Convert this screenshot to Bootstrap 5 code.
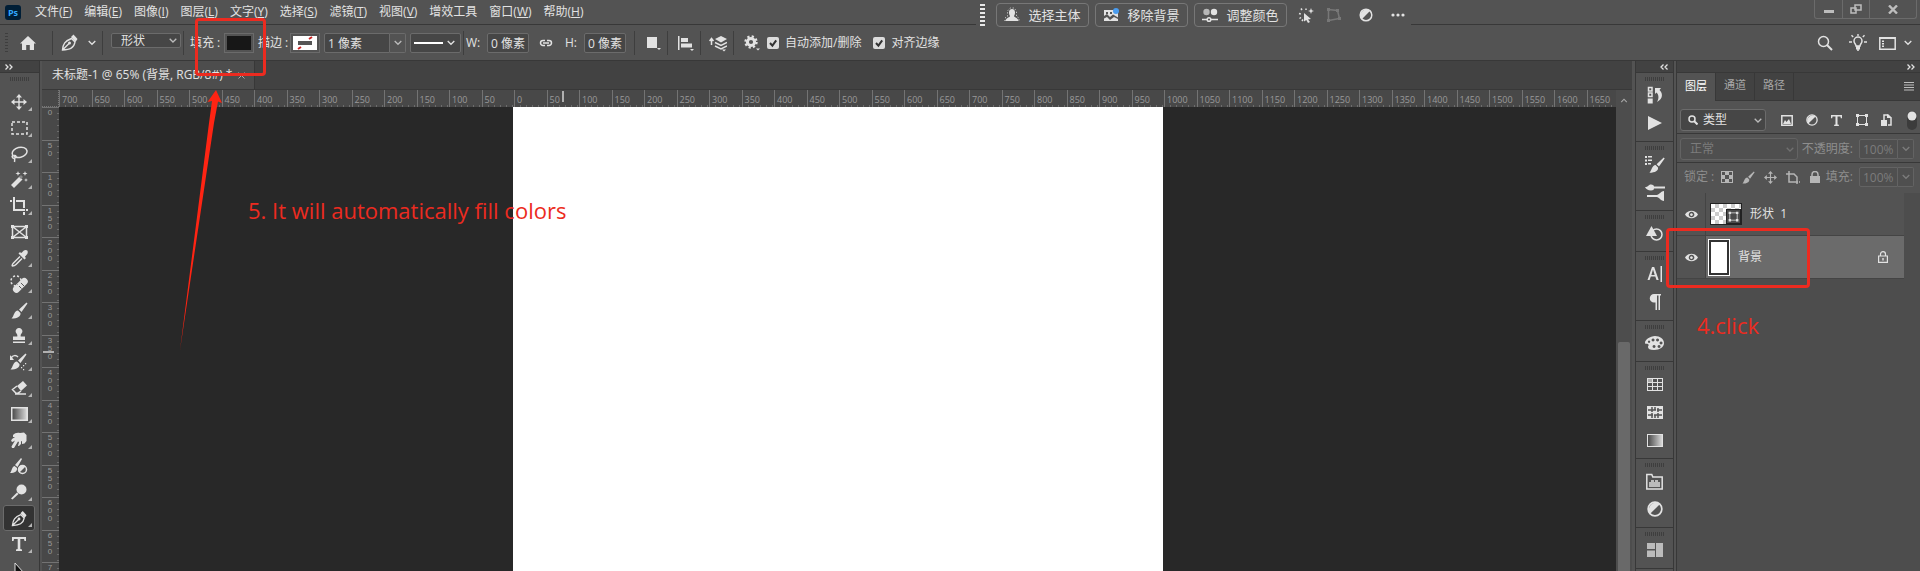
<!DOCTYPE html>
<html lang="zh-CN">
<head>
<meta charset="utf-8">
<meta name="viewport" content="width=device-width, initial-scale=1">
<title>未标题-1</title>
<link href="https://cdn.jsdelivr.net/npm/bootstrap@5.3.0/dist/css/bootstrap.min.css" rel="stylesheet">
<style>
:root{--bar:#535353;--well:#424242;--line:#383838;--pane:#4d4d4d;--ink:#e2e2e2;--dim:#8e8e8e;--edge:#6b6b6b;--red:#ec2b20}
body{font-family:"Open Sans","Noto Sans CJK SC",sans-serif;font-size:12px;line-height:16px;color:var(--ink);background:var(--bar);height:100vh;overflow:hidden}
button{border:0;background:none;color:inherit;padding:0;line-height:1}
svg{display:block;flex:none;fill:currentColor}
.ln{fill:none;stroke:currentColor;stroke-width:1.5}
a{color:inherit;text-decoration:none}
.s2{margin-left:2px}.s4{margin-left:4px}.s6{margin-left:6px}.s8{margin-left:8px}.s10{margin-left:10px}.s12{margin-left:12px}
/* menu bar */
.menubar{height:25px;border-bottom:1px solid var(--line);background:var(--bar)}
.menus{gap:12px;margin-left:14px}
.logo{width:16px;height:15px;margin-left:5px;border-radius:3px;background:#001e36;color:#31a8ff;font-size:9px;font-weight:700;line-height:15px;text-align:center}
.winctl{border:1px solid var(--edge);border-top:0;border-radius:0 0 3px 3px;height:19px;margin-right:3px;color:#bdbdbd}
.winctl button{width:27px;display:flex;justify-content:center;align-items:center}
.winctl button+button{border-left:1px solid var(--edge)}
.winctl .wide{width:47px}
/* floating task bar */
.taskbar{left:976px;top:0;width:435px;height:33px;background:var(--bar);gap:6px;padding:1px 4px 0;z-index:3}
.dots{width:5px;height:23px;margin-right:5px;background:repeating-linear-gradient(#e8e8e8 0 2px,transparent 2px 4px)}
.task{height:24px;width:93px;border:1px solid #777;border-radius:4px;font-size:13px;gap:8px}
.tico{width:18px;display:flex;justify-content:center}
/* options bar */
.optbar{height:36px;border-bottom:1px solid var(--line)}
.grip{width:3px;height:20px;margin-left:5px;background:repeating-linear-gradient(#3e3e3e 0 1px,transparent 1px 3px)}
.home{width:40px}
.rule{width:1px;height:24px;background:#3e3e3e}
.fld,.fld:disabled{appearance:none;border:1px solid var(--edge);border-radius:2px;background-color:#464646;color:var(--ink);font-size:12px;line-height:16px;height:20px;padding:0 0 0 3px;min-width:0}
.drop,.drop:disabled{padding-left:9px;background-image:url("data:image/svg+xml,%3Csvg xmlns='http://www.w3.org/2000/svg' viewBox='0 0 8 5'%3E%3Cpath d='M.7.7 4 4 7.3.7' fill='none' stroke='%23bbb' stroke-width='1.3'/%3E%3C/svg%3E");background-repeat:no-repeat;background-position:right 3px center;background-size:8px 5px}
.w42{width:42px}.w66{width:66px}.w70{width:70px}
.low{height:15px;line-height:13px;margin-bottom:4px}
.step{border:1px solid var(--edge);border-left:0;border-radius:0 2px 2px 0;width:16px;height:20px;display:flex;align-items:center;justify-content:center;color:#bbb}
.lbl{width:30px;white-space:nowrap}
.lblx{width:15px}
.swatch{width:30px;height:20px;border:1px solid var(--edge);padding:2px}
.swatch span{display:block;height:100%;background:#171717}
.tick.form-check-input{width:12px;height:12px;margin-top:0;border:0;border-radius:2px;background:#dcdcdc url("data:image/svg+xml,%3Csvg xmlns='http://www.w3.org/2000/svg' viewBox='0 0 12 12'%3E%3Cpath d='M3 6l2.4 2.6L9.2 3.4' fill='none' stroke='%23333' stroke-width='2'/%3E%3C/svg%3E") center/12px no-repeat}
/* columns */
.strip{height:12px;background:var(--well);border-bottom:1px solid var(--line);color:var(--ink)}
.tools{width:40px;border-right:1px solid var(--line);background:var(--bar)}
.hgrip{width:20px;height:4px;margin:4px auto 0;background:repeating-linear-gradient(90deg,#3e3e3e 0 1px,transparent 1px 2px)}
.toolset{padding-top:8px}
.tool{width:32px;height:26px;margin-left:3px;display:flex;align-items:center;justify-content:center;position:relative}
.tool.fly::after{content:"";position:absolute;right:3px;bottom:4px;border:2px solid;border-color:transparent #b5b5b5 #b5b5b5 transparent}
.tool.on{background:#333;box-shadow:inset 0 0 0 1px var(--edge);border-radius:3px}
.doc{margin:0 3px 0 2px;background:var(--well)}
.tabs{height:29px;border-bottom:1px solid var(--line)}
.doctab{height:28px;width:213px;background:var(--pane);border-right:1px solid var(--line);padding-left:10px}
.hr-row{height:17px}
.corner{width:17px;background:#484848;border-right:1px dotted #777;border-bottom:1px dotted #777}
.hruler,.vruler{background:#484848;color:#9a9a9a;font-size:9px;line-height:8px;overflow:hidden;position:relative}
.pair{flex:none;display:flex}
.hruler .pair{width:65px}
.hruler .mark{flex:1 1 0;width:0;border-left:1px solid #737373;padding:6px 0 0 2px;background:repeating-linear-gradient(90deg,transparent 0 5px,#6c6c6c 5px 6px) left bottom/100% 2px no-repeat}
.vruler{width:17px;font-family:"Liberation Sans",sans-serif;font-size:8px}
.vruler .pair{height:65px;flex-direction:column}
.vruler .mark{flex:1 1 0;height:0;border-top:1px solid #737373;padding:1px 6px 0 5px;text-align:center;background:repeating-linear-gradient(transparent 0 5px,#6c6c6c 5px 6px) right top/2px 100% no-repeat}
/* pointer position shown on the rulers */
.at{position:absolute;background:#b0b0b0}
.hruler .at{left:503px;top:1px;width:2px;height:11px}
.vruler .at{top:244px;left:1px;width:11px;height:2px}
.stage{background:#282828;overflow:hidden}
.sheet{width:650px;margin-left:454px;background:#fff}
.vbar{width:16px;background:var(--pane)}
.thumb{width:12px;margin-left:2px;margin-top:239px;background:#696969;border-radius:2px 2px 0 0}
.dock{width:39px;border:solid var(--line);border-width:0 1px;background:var(--bar)}
.dock .bay{border-bottom:1px solid var(--line);padding-bottom:4px}
.dock .bay .hgrip{margin-bottom:0}
.dock .bay button{width:100%;height:28px;display:flex;align-items:center;justify-content:center}
.layers{width:244px;background:var(--pane);border-left:1px solid var(--line);margin-left:2px}
.ptabs{height:28px;background:var(--well)}
.ptabs button{width:39px;border:solid var(--line);border-width:0 1px 1px 0;color:#a8a8a8;font-size:11px;padding-bottom:4px}
.ptabs button.on{background:var(--bar);border-bottom:0;color:#fff}
.ptabs .rest{border-bottom:1px solid var(--line);padding-right:6px;color:#bdbdbd}
.prow{background:var(--bar);border-bottom:1px solid var(--line);padding-left:3px;padding-right:6px}
.r1{height:33px;padding-top:6px}.r2{height:29px;padding-top:2px}.r3{height:30px;padding-bottom:2px;border-bottom:0;color:var(--dim)}
.prow .pick{height:22px;border-radius:3px}
.faint .fld,.faint .step{border-color:#636363;color:#7c7c7c;background-color:#4f4f4f}
.faint{color:var(--dim)}
.faint .drop{background-image:url("data:image/svg+xml,%3Csvg xmlns='http://www.w3.org/2000/svg' viewBox='0 0 8 5'%3E%3Cpath d='M.7.7 4 4 7.3.7' fill='none' stroke='%23707070' stroke-width='1.3'/%3E%3C/svg%3E")}
.filt{gap:8px}.locks{gap:5px}
.filt button,.locks button{width:17px;display:flex;justify-content:center}
.lay{border-bottom:1px solid #444;height:43px}
.eye{width:29px;height:100%;border-right:1px solid #444;display:flex;align-items:center;justify-content:center;background:var(--bar)}
.lay .body{height:100%;background:var(--bar)}
.lay.sel .body{background:#6b6b6b}
.gut{margin-right:16px}
.th1{width:32px;height:22px;border:1px solid #222;background:conic-gradient(#ccc 25%,#fff 0 50%,#ccc 0 75%,#fff 0) 0 0/8px 8px}
.th1 svg{background:#4a4a4a;border:1px solid #222}
.th2{width:22px;height:37px;border:1px solid #fff;background:#fff;box-shadow:inset 0 0 0 2px #333}
/* annotations drawn over the workspace */
.note{color:var(--red);font-family:"Open Sans",sans-serif;font-size:22px;line-height:28px;white-space:nowrap;z-index:5}
.box{border:3px solid var(--red);border-radius:4px;z-index:5;pointer-events:none}
.b1{left:195px;top:18px;width:71px;height:58px}
.b2{right:110px;top:228px;width:144px;height:60px}
.n5{left:248px;top:196px}
.n4{right:161px;top:311px}
.arrow{left:178px;top:89px;z-index:5}
</style>
</head>
<body class="d-flex flex-column position-relative">

<header class="menubar d-flex align-items-center flex-shrink-0">
  <span class="logo">Ps</span>
  <nav class="menus d-flex me-auto" aria-label="菜单">
    <a href="#">文件(<u>F</u>)</a><a href="#">编辑(<u>E</u>)</a><a href="#">图像(<u>I</u>)</a><a href="#">图层(<u>L</u>)</a><a href="#">文字(<u>Y</u>)</a><a href="#">选择(<u>S</u>)</a><a href="#">滤镜(<u>T</u>)</a><a href="#">视图(<u>V</u>)</a><a href="#">增效工具</a><a href="#">窗口(<u>W</u>)</a><a href="#">帮助(<u>H</u>)</a>
  </nav>
  <div class="winctl d-flex align-self-start">
    <button aria-label="最小化"><svg width="10" height="10"><path d="M0 6h10v3H0z"/></svg></button>
    <button aria-label="还原"><svg width="12" height="10"><path class="ln" d="M5 1h6v5H5zM1 4h5v5H1z"/></svg></button>
    <button class="wide" aria-label="关闭"><svg width="10" height="9"><path fill="none" stroke="currentColor" stroke-width="2.4" d="M1 .5l8 8M9 .5l-8 8"/></svg></button>
  </div>
</header>

<div class="taskbar position-absolute d-flex align-items-center pb-1">
  <span class="dots"></span>
  <button class="task d-flex align-items-center justify-content-center"><svg width="16" height="16"><path d="M8 2c2 0 3.200 1.500 3 4-.1 1.500-.8 2.500-1 3 0 1.500 4 1.500 4.500 5h-13C2 10.500 6 10.500 6 9c-.2-.5-.9-1.500-1-3-.2-2.500 1-4 3-4z"/><path fill="none" stroke="currentColor" stroke-dasharray="1 2" d="M1 14V11l2.500-1.500V4L6 1h4l2.500 3v5.500L15 11v3"/></svg>选择主体</button>
  <button class="task d-flex align-items-center justify-content-center"><svg width="16" height="16"><path d="M1 3h14v11H1z"/><path fill="#535353" d="M3 5h2v2H3zM7 5h2v2H7zM1 9l3-2 3 3 3-2.500 5 3V12l-4-2-4 3-3-3-3 1.500z"/><circle cx="13" cy="4" r="3" fill="#4a9df0"/></svg>移除背景</button>
  <button class="task d-flex align-items-center justify-content-center"><svg width="16" height="16"><circle cx="4.500" cy="5" r="3.200" opacity=".7"/><circle cx="12" cy="5" r="3.200"/><path class="ln" d="M0 12.500h5M9 12.500h7"/><circle class="ln" cx="7" cy="12.500" r="1.800"/></svg>调整颜色</button>
  <button class="tico ms-1" aria-label="选择"><svg width="16" height="16"><path d="M6 6l7 6-3 .5L12 15l-2 1-1.700-3L6 14.500z"/><path class="ln" d="M4 3L3 1.500M1 6.500l1.800.5M1.500 11.500L3 10.500M8 3V1.500M4 14l1-1.500" stroke-dasharray="2 2"/><path d="M13 1l.8 2.200L16 4l-2.200.8L13 7l-.8-2.200L10 4l2.200-.8z"/></svg></button>
  <button class="tico ms-1" aria-label="变换" style="color:#777"><svg width="16" height="16"><path class="ln" d="M2.500 2.500l9 1 2 8-11 2z"/><path d="M1 1h3v3H1zM10 2h3v3h-3zM12 10h3v3h-3zM1 12h3v3H1z"/></svg></button>
  <button class="tico ms-2" aria-label="调整"><svg width="14" height="14"><circle class="ln" cx="7" cy="7" r="5.800"/><path d="M11.200 2.800A6 6 0 0 0 2.800 11.200z"/></svg></button>
  <button class="tico ms-2" aria-label="更多"><svg width="16" height="6"><circle cx="3" cy="3" r="1.600"/><circle cx="8" cy="3" r="1.600"/><circle cx="13" cy="3" r="1.600"/></svg></button>
</div>

<div class="optbar d-flex align-items-center flex-shrink-0">
  <span class="grip"></span>
  <button class="home d-flex justify-content-center" aria-label="主页"><svg width="16" height="16"><path d="M8 1l8 7.500h-2V15H9.800v-5H6.200v5H2V8.500H0z"/></svg></button>
  <span class="rule s4"></span>
  <button class="s8" aria-label="钢笔工具"><svg width="17" height="17"><use href="#pen"/></svg></button>
  <button class="s10" aria-label="预设"><svg width="8" height="6"><use href="#chev"/></svg></button>
  <span class="rule s6"></span>
  <select class="fld drop low w70 s8" aria-label="模式"><option>形状</option></select>
  <span class="rule s2"></span>
  <span class="lbl s6">填充 :</span>
  <button class="swatch s4" aria-label="填充"><span></span></button>
  <span class="lbl s4">描边 :</span>
  <button class="swatch s2" aria-label="描边"><svg width="24" height="14"><path fill="#fff" d="M0 0h24v14H0z"/><path d="M5 13l3-2M16 3l3-2" stroke="#cc2222" stroke-width="2"/><path fill="#555" d="M5 5h14v4H5z"/></svg></button>
  <div class="d-flex s4"><input class="fld w66 rounded-end-0" value="1 像素" aria-label="描边宽度"><button class="step" aria-label="宽度列表"><svg width="8" height="6"><use href="#chev"/></svg></button></div>
  <button class="fld s4 d-flex align-items-center gap-1" aria-label="描边类型"><svg width="29" height="2"><path fill="#fff" d="M0 0h29v2H0z"/></svg><svg width="13" height="6" viewBox="0 0 13 6"><use href="#chev"/></svg></button>
  <span class="rule s2"></span>
  <label class="lblx s2" for="w">W:</label><input id="w" class="fld w42 s6" value="0 像素">
  <button class="s10" aria-label="链接"><svg width="14" height="8"><path class="ln" d="M6 1.500H4a2.500 2.500 0 0 0 0 5h2M8 1.500h2a2.500 2.500 0 0 1 0 5H8M4 4h6"/></svg></button>
  <label class="lblx s12" for="h">H:</label><input id="h" class="fld w42 s4" value="0 像素">
  <span class="rule s8"></span>
  <button class="s12" aria-label="路径操作"><svg width="14" height="17"><path d="M0 3h10v11H0zM10 14h4l-2 2z"/></svg></button>
  <span class="rule s6"></span>
  <button class="s10" aria-label="路径对齐"><svg width="16" height="18"><path d="M0 2h1.500v14H0zM3 4h7v4H3zM3 9.500h11v4H3zM12 15h4l-2 2z"/></svg></button>
  <span class="rule s6"></span>
  <button class="s8" aria-label="路径排列"><svg width="18" height="18"><path d="M6 5l6-3 6 3-6 3.500z"/><path class="ln" d="M6 8.500l6 3 6-3M6 12l6 3 6-3M2.500 11V5M.5 7l2-2.500 2 2.500"/><path d="M13 15.500h4l-2 2z"/></svg></button>
  <span class="rule s6"></span>
  <button class="s10" aria-label="设置"><svg width="17" height="17"><circle cx="7" cy="8" r="3.600" fill="none" stroke="currentColor" stroke-width="3"/><circle cx="7" cy="8" r="5.600" fill="none" stroke="currentColor" stroke-width="2.200" stroke-dasharray="2.200 2.200"/><path d="M12 14.500h4l-2 2z"/></svg></button>
  <input type="checkbox" class="form-check-input tick s6" id="auto" checked><label for="auto" class="s6">自动添加/删除</label>
  <input type="checkbox" class="form-check-input tick s12" id="snap" checked><label for="snap" class="s6 me-auto">对齐边缘</label>
  <button aria-label="搜索"><svg width="16" height="16"><circle class="ln" cx="6.500" cy="6.500" r="5"/><path fill="none" stroke="currentColor" stroke-width="2" d="M10 10l5 5"/></svg></button>
  <button class="ms-3" aria-label="发现"><svg width="18" height="18"><path class="ln" d="M7 12c0-2-2-2.500-2-5a4 4 0 0 1 8 0c0 2.500-2 3-2 5z"/><path d="M7 12h4v3.500H9.800V17H8.200v-1.500H7zM8.300 0h1.400v2H8.300zM0 7.300h3v1.400H0zM15 7.300h3v1.400h-3zM2 1.800l1-1 1.700 1.700-1 1zM16 1.800l-1-1-1.700 1.700 1 1z"/></svg></button>
  <button class="s12" aria-label="工作区"><svg width="17" height="14"><path class="ln" d="M.8 1.800h15.400v11.400H.8z"/><path d="M1 1h15v2H1zM3 4.500h2v1.500H3zM3 7h2v1.500H3zM3 9.500h2V11H3z"/></svg></button>
  <button class="s8" aria-label="工作区列表"><svg class="me-2" width="8" height="6"><use href="#chev"/></svg></button>
</div>

<main class="d-flex flex-grow-1" style="min-height:0">
  <aside class="tools flex-shrink-0 overflow-hidden" aria-label="工具">
    <div class="strip d-flex align-items-center ps-1"><svg width="10" height="6" viewBox="0 0 8 6"><use href="#dbl"/></svg></div>
    <div class="hgrip"></div>
    <div class="toolset">
      <button class="tool fly" aria-label="移动"><svg width="16" height="16"><use href="#move"/></svg></button>
      <button class="tool fly" aria-label="选框"><svg width="17" height="14"><path class="ln" stroke-dasharray="3 2" d="M1 1h15v12H1z"/></svg></button>
      <button class="tool fly" aria-label="套索"><svg width="18" height="17"><ellipse class="ln" cx="9.500" cy="6.500" rx="7.500" ry="5" transform="rotate(-14 9 6)"/><path class="ln" d="M3 9c-2 2 0 4 2 3s1-3-1-2.500M4 12c1 1 1 2 .5 4"/></svg></button>
      <button class="tool fly" aria-label="魔棒"><svg width="18" height="18"><path d="M1 14l3 3L12.500 8.500l-3-3z"/><path d="M9 6l2 2 2-2-2-2z" fill="#888"/><path d="M8 0l.6 1.800L10.500 2.500 8.600 3.200 8 5l-.6-1.800L5.500 2.500l1.900-.7zM15 0l.6 1.800 1.900.7-1.900.7L15 5l-.6-1.800-1.900-.7 1.900-.7zM16 7l.5 1.500L18 9l-1.500.5L16 11l-.5-1.500L14 9l1.500-.5z"/></svg></button>
      <button class="tool fly" aria-label="裁剪"><svg width="18" height="18"><path d="M3 0h2v12h10v2H3zM0 3h2v2H0zM6 3h9v8h-2V5H6zM13 15h2v3h-2zM16 12h2v2h-2z"/></svg></button>
      <button class="tool" aria-label="图框"><svg width="17" height="14"><path class="ln" d="M1.500 1.500h14v11h-14zM1.500 1.500l14 11M15.500 1.500l-14 11"/><path d="M0 0h3v3H0zM14 0h3v3h-3zM0 11h3v3H0zM14 11h3v3h-3z"/></svg></button>
      <button class="tool fly" aria-label="吸管"><svg width="17" height="17"><path d="M10 3c1.500 0 2-3 4.500-3S17 2 16.500 3.500 14 6 14 7l1 1-1.500 1.500-6-6L9 2z"/><path class="ln" d="M9 6.500L2.500 13C1 14.500 1 16 1.500 16S4 15.500 5 14.500L11 8.500"/></svg></button>
      <button class="tool fly" aria-label="修复"><svg width="18" height="18"><rect x="1" y="7" width="18" height="7" rx="3.500" transform="rotate(-45 10 10)"/><path d="M7.500 9.500l4 4M10 7l4 4" stroke="#535353"/><circle class="ln" stroke-dasharray="2 2" cx="6" cy="6" r="5"/></svg></button>
      <button class="tool fly" aria-label="画笔"><svg width="17" height="17"><use href="#brush"/></svg></button>
      <button class="tool fly" aria-label="图章"><svg width="16" height="16"><path d="M8 0a3.200 3.200 0 0 1 2.800 5C10 6 9.500 7 9.700 8.500H14V12H2V8.500h4.300C6.500 7 6 6 5.200 5A3.200 3.200 0 0 1 8 0zM2 13.500h12V15H2z"/></svg></button>
      <button class="tool fly" aria-label="历史画笔"><svg width="18" height="18"><use href="#brush"/><path class="ln" d="M1 5c2-3 5-3 7-1"/><path d="M0 2v5h4zM13 12h1.200v1.200H13zM11 14h1.200v1.200H11zM15 10h1.200v1.200H15zM13 16h1.200v1.200H13z"/></svg></button>
      <button class="tool fly" aria-label="橡皮擦"><svg width="16" height="16"><path d="M6 6l6-5 4 4.500-6 5.500z"/><path class="ln" d="M6 6L1.500 9.500 5 13.200h2L10 11M4 14h11"/></svg></button>
      <button class="tool fly" aria-label="渐变"><svg width="17" height="14"><rect x=".75" y=".75" width="15.500" height="12.500" fill="url(#gr)" stroke="#e2e2e2" stroke-width="1.500"/></svg></button>
      <button class="tool fly" aria-label="涂抹"><svg width="16" height="17"><path d="M2 3C4 1 6 .5 9 1l4-.5L15.500 3v6l-2 2.500-2.500.5v-3l-1 .5V12l-2 2H7l1-4-1-.5L3 16H1l-.5-1.500L4 8.500 1.500 10 0 9l1-2 3-2H2z"/></svg></button>
      <button class="tool" aria-label="混合画笔"><svg width="18" height="17"><path d="M11 0l1 1-4.500 8L5 7zM4.500 8L7 10c.5 3-2 5-7 5 2-2 1.500-6 4.500-7z"/><circle class="ln" cx="12.500" cy="11.500" r="4"/><path d="M9.500 14.500a4 4 0 0 1 6-6z"/></svg></button>
      <button class="tool fly" aria-label="减淡"><svg width="16" height="16"><circle cx="10.500" cy="5.500" r="5"/><path d="M6 8.500L7.500 10 1.500 15.500 0 14.500z"/></svg></button>
      <button class="tool fly on" aria-label="钢笔"><svg width="16" height="17" viewBox="0 0 17 17"><use href="#pen"/></svg></button>
      <button class="tool fly" aria-label="文字"><svg width="14" height="14"><use href="#tee"/></svg></button>
      <button class="tool" aria-label="选择路径"><svg width="12" height="17" viewBox="0 0 12 17"><path d="M2 1l9 10H7l2 5-2 .8L5 12l-3 3z" fill="#111" stroke="#ddd" stroke-width="1"/></svg></button>
    </div>
  </aside>

  <section class="doc d-flex flex-column flex-grow-1" style="min-width:0">
    <div class="tabs flex-shrink-0"><div class="doctab d-flex align-items-center"><span>未标题-1 @ 65% (背景, RGB/8#) *</span><button class="s6" aria-label="关闭标签"><svg width="7" height="7"><path d="M.5.5l6 6M6.500.5l-6 6" stroke="#aaa"/></svg></button></div></div>
    <div class="d-flex flex-grow-1" style="min-height:0">
      <div class="d-flex flex-column flex-grow-1" style="min-width:0">
        <div class="hr-row d-flex flex-shrink-0"><div class="corner flex-shrink-0"></div><div class="hruler d-flex flex-grow-1" id="hruler"><span class="at"></span></div></div>
        <div class="d-flex flex-grow-1" style="min-height:0">
          <div class="vruler flex-shrink-0" id="vruler"><span class="at"></span></div>
          <div class="stage d-flex flex-grow-1"><div class="sheet flex-shrink-0"></div></div>
        </div>
      </div>
      <div class="vbar d-flex flex-column flex-shrink-0"><svg class="mx-auto mt-2" width="8" height="5" viewBox="0 0 8 6"><path d="M.7 5L4 1.500 7.300 5" fill="none" stroke="#aaa" stroke-width="1.300"/></svg><div class="thumb flex-grow-1"></div></div>
    </div>
  </section>

  <aside class="dock flex-shrink-0 overflow-hidden" aria-label="面板">
    <div class="strip d-flex align-items-center justify-content-end pe-1"><svg width="10" height="6" viewBox="-8 0 8 6"><g transform="scale(-1 1)"><use href="#dbl"/></g></svg></div>
    <div class="bay"><div class="hgrip"></div>
      <button aria-label="历史记录"><svg width="16" height="18"><path class="ln" d="M1.500 1.500h3.500v3.500H1.500zM1.500 7h3.500v3.500H1.500z"/><path d="M.7 12.500h5v5h-5zM8 2h6l-1.500 2c4 4 3 9-2.500 12 2-4 2-7-.5-9.500L8 8z"/></svg></button>
      <button aria-label="动作"><svg width="14" height="14"><path d="M0 0l14 7-14 7z"/></svg></button></div>
    <div class="bay"><div class="hgrip"></div>
      <button aria-label="画笔设置"><svg width="20" height="17"><path d="M0 0h2v2H0zM3 0h4v1.500H3zM0 3.500h2v2H0zM3 3.500h4V5H3zM0 7h2v2H0zM3 7h3v1.500H3z"/><g transform="translate(4 1) scale(.95)"><use href="#brush"/></g></svg></button>
      <button aria-label="画笔"><svg width="20" height="17"><path d="M0 3c4 0 3-2.500 6-2.500 2 0 3 1 3 2h11v2H9c0 1-1 2-3 2-3 0-5-1.500-6-3.500zM2 11h10c3-1 4-4 7-4v10c-3 0-4-3-7-4H2z"/></svg></button></div>
    <div class="bay"><div class="hgrip"></div>
      <button aria-label="形状"><svg width="17" height="15"><path d="M5.500 0L11 10H0z"/><circle class="ln" cx="10.500" cy="8.500" r="5.500"/></svg></button></div>
    <div class="bay"><div class="hgrip"></div>
      <button aria-label="字符"><svg width="16" height="16"><path d="M5 1h2.200l4.500 13H9.500L8.300 10.500H3.800L2.600 14H.5zM6 3.500L4.400 9h3.300zM13.500 0H15v16h-1.500z" fill-rule="evenodd"/></svg></button>
      <button aria-label="段落"><svg width="12" height="16"><path d="M5 0h7v1.500h-1V16H9.500V1.500H8V16H6.500V8.500H5A4 4 0 0 1 5 0z"/></svg></button></div>
    <div class="bay"><div class="hgrip"></div>
      <button aria-label="颜色"><svg width="19" height="14"><path fill-rule="evenodd" d="M10 0c5 0 9 3 9 7s-4 7-10 7c-4 0-6-1-6-3 0-1 1-1.500.5-2.500C3 7.500 0 9 0 6.500S5 0 10 0zM8 2.500a1.500 1.500 0 1 0 .1 0zM12.500 2.500a1.500 1.500 0 1 0 .1 0zM16 5.500a1.500 1.500 0 1 0 .1 0zM14 9a1.500 1.500 0 1 0 .1 0zM9 9a1.500 1.500 0 1 0 .1 0zM4 4.500a1.200 1.200 0 1 0 .1 0z"/></svg></button></div>
    <div class="bay"><div class="hgrip"></div>
      <button aria-label="色板"><svg width="16" height="13"><path fill-rule="evenodd" d="M0 0h16v13H0zM6 1h4v3H6zM11 1h4v3h-4zM1 5h4v3H1zM6 5h4v3H6zM11 5h4v3h-4zM1 9h4v3H1zM6 9h4v3H6zM11 9h4v3h-4z"/><path fill="#aaa" d="M1 1h4v3H1z"/></svg></button>
      <button aria-label="图案"><svg width="16" height="13"><path d="M0 0h16v13H0z"/><path d="M5 1v5M11 2v4M5 7v5M11 7v5M1 4h8M10 4h5M1 9h5M7 9h8M8 1v3M8 9v3" stroke="#535353" stroke-width="1.500"/></svg></button>
      <button aria-label="渐变"><svg width="16" height="13"><rect x=".5" y=".5" width="15" height="12" fill="url(#gr)" stroke="#e2e2e2"/></svg></button></div>
    <div class="bay"><div class="hgrip"></div>
      <button aria-label="库"><svg width="17" height="17"><path class="ln" d="M.8 1.500h5l1 2.500h9.400v12H.8z" stroke="#bbb"/><path fill="#bbb" d="M3 9h2V7h3v2h1V7h3v2h2v5H3z"/></svg></button>
      <button aria-label="调整"><svg width="16" height="16" viewBox="0 0 14 14"><use href="#half"/></svg></button></div>
    <div class="bay"><div class="hgrip"></div>
      <button aria-label="布局"><svg width="16" height="14"><path fill="#bbb" d="M0 0h8v6H0zM0 7.500h8V14H0zM9 0h7v14H9z"/></svg></button></div>
  </aside>

  <aside class="layers d-flex flex-column flex-shrink-0" aria-label="图层">
    <div class="strip d-flex align-items-center justify-content-end pe-1 flex-shrink-0"><svg width="10" height="6" viewBox="0 0 8 6"><use href="#dbl"/></svg></div>
    <div class="ptabs d-flex flex-shrink-0"><button class="on">图层</button><button>通道</button><button>路径</button><div class="rest flex-grow-1 d-flex align-items-center justify-content-end"><svg width="10" height="9"><path d="M0 0h10v1H0zM0 2.500h10v1H0zM0 5h10v1H0zM0 7.500h10v1H0z"/></svg></div></div>
    <div class="prow r1 d-flex align-items-center">
      <div class="position-relative"><select class="fld drop pick" style="width:86px;padding-left:22px" aria-label="滤镜类型"><option>类型</option></select><svg class="position-absolute top-50 start-0 translate-middle-y ms-2" width="10" height="10"><circle class="ln" cx="4" cy="4" r="3"/><path fill="none" stroke="currentColor" stroke-width="2" d="M6 6l3.500 3.500"/></svg></div>
      <div class="filt d-flex align-items-center s12 flex-grow-1">
        <button aria-label="像素"><svg width="12" height="11"><path class="ln" d="M.8.8h10.400v9.400H.8z"/><path d="M2 9l2-4 1.500 2L8 4l2 5z"/></svg></button>
        <button aria-label="调整"><svg width="12" height="12" viewBox="0 0 14 14"><use href="#half"/></svg></button>
        <button aria-label="文字"><svg width="11" height="11" viewBox="0 0 14 14"><use href="#tee"/></svg></button>
        <button aria-label="形状"><svg width="12" height="12"><use href="#frame"/></svg></button>
        <button aria-label="智能对象"><svg width="11" height="13"><path class="ln" d="M3 6V1h4l3 3v7H7"/><path d="M0 6h6v6H0zM6 0l5 4H6z"/></svg></button>
        <button class="ms-auto" aria-label="滤镜开关"><svg width="10" height="19"><rect width="10" height="19" rx="5" fill="#3c3c3c"/><circle cx="5" cy="5" r="4.500"/></svg></button>
      </div>
    </div>
    <div class="prow r2 faint d-flex align-items-center">
      <select class="fld drop pick" style="width:118px" disabled aria-label="混合模式"><option>正常</option></select>
      <label class="ms-auto" for="op">不透明度:</label><input id="op" class="fld rounded-end-0 s6" style="width:39px" value="100%" disabled><button class="step" disabled aria-label="不透明度滑块"><svg width="8" height="6"><use href="#chev"/></svg></button>
    </div>
    <div class="prow r3 faint d-flex align-items-center">
      <span class="lbl s4 me-1">锁定 :</span>
      <div class="locks d-flex" style="color:#b5b5b5">
        <button aria-label="锁定透明"><svg width="12" height="12"><path fill-rule="evenodd" d="M0 0h12v12H0zM1 1v3h3V1zM8 1v3h3V1zM4 4v4h4V4zM1 8v3h3V8zM8 8v3h3V8z"/></svg></button>
        <button aria-label="锁定像素"><svg width="13" height="13" viewBox="0 0 17 17"><use href="#brush"/></svg></button>
        <button aria-label="锁定位置"><svg width="13" height="13" viewBox="0 0 16 16"><use href="#move"/></svg></button>
        <button aria-label="锁定画板"><svg width="14" height="13"><path class="ln" d="M3 0v11h9M0 3h8l3 3v7M13 11h1"/></svg></button>
        <button aria-label="锁定全部"><svg width="10" height="12"><path d="M0 5h10v7H0z"/><path class="ln" d="M2 5V3.500a3 3 0 0 1 6 0V5"/></svg></button>
      </div>
      <label class="ms-auto" for="fi">填充:</label><input id="fi" class="fld rounded-end-0 s6" style="width:39px" value="100%" disabled><button class="step" disabled aria-label="填充滑块"><svg width="8" height="6"><use href="#chev"/></svg></button>
    </div>
    <div class="gut">
      <div class="lay d-flex"><button class="eye" aria-label="可见"><svg width="13" height="9"><use href="#eye"/></svg></button><div class="body flex-grow-1 d-flex align-items-center ps-1"><span class="th1 d-flex justify-content-end align-items-end"><svg width="15" height="15" viewBox="-2 -2 16 16"><use href="#frame"/></svg></span><span class="s8">形状&nbsp; 1</span></div></div>
      <div class="lay sel d-flex"><button class="eye" aria-label="可见"><svg width="13" height="9"><use href="#eye"/></svg></button><div class="body flex-grow-1 d-flex align-items-center"><span class="th2 s2"></span><span class="s8 me-auto">背景</span><svg class="me-3" width="10" height="12"><path fill="none" stroke="currentColor" stroke-width="1.2" d="M.6 5h8.800v6.400H.6zM2.500 5V3.200a2.500 2.500 0 0 1 5 0V5"/><path d="M4.300 7h1.400v2.500H4.300z"/></svg></div></div>
    </div>
  </aside>
</main>

<div class="box b1 position-absolute"></div>
<div class="box b2 position-absolute"></div>
<svg class="arrow position-absolute" width="46" height="262"><path fill="#ff2413" d="M38 1l6 13-4-1.500L36 34 2 261 31 34l3-22-4.500 1z"/></svg>
<div class="note n5 position-absolute">5. It will automatically fill colors</div>
<div class="note n4 position-absolute">4.click</div>

<svg width="0" height="0" class="position-absolute" aria-hidden="true"><defs>
  <linearGradient id="gr"><stop stop-color="#444"/><stop offset="1" stop-color="#ddd"/></linearGradient>
  <g id="pen"><path d="M1.500 16C2 10 4 7 10.500 4.500L14 8c-1 6-5 7.500-12.500 8zL8 9.500" fill="none" stroke="currentColor" stroke-width="1.400"/><circle cx="8.500" cy="9" r="1.500"/><path d="M10 3l2.500-2.500 4 4.500L14.500 8z"/></g>
  <path id="chev" d="M.7 1L4 4.300 7.300 1" fill="none" stroke="currentColor" stroke-width="1.300"/>
  <path id="dbl" d="M.5.5L3 3 .5 5.500M4.500.5L7 3 4.500 5.500" fill="none" stroke="currentColor" stroke-width="1.300"/>
  <path id="move" d="M8 0l3 3.500H8.700v3.800h3.800V5L16 8l-3.500 3V8.700H8.700v3.800H11L8 16l-3-3.500h2.300V8.700H3.500V11L0 8l3.500-3v2.300h3.800V3.500H5z"/>
  <path id="brush" d="M15.500.5l1 1-6 8.500L8 7.500zM7 8.500L9.500 11c.5 3.500-3 5.500-9 5.500 2.500-2 2.500-8 6.500-8z"/>
  <path id="tee" d="M0 0h14v4h-1.500L12 2H8.300v10l1.700.5V14H4v-1.500l1.700-.5V2H2l-.5 2H0z"/>
  <g id="half"><circle cx="7" cy="7" r="6" fill="none" stroke="currentColor" stroke-width="1.500"/><path d="M11.200 2.800A6 6 0 0 0 2.800 11.200z"/></g>
  <path id="frame" fill-rule="evenodd" d="M0 0h3v1h6V0h3v3h-1v6h1v3H9v-1H3v1H0V9h1V3H0zM3 2v1H2v6h1v1h6V9h1V3H9V2z"/>
  <path id="eye" fill-rule="evenodd" d="M0 4.500C3-.5 10-.5 13 4.500 10 9.500 3 9.500 0 4.500zM6.500 1.700a2.800 2.800 0 1 0 .1 0zM6.500 3.200a1.400 1.400 0 1 1-.1 0z"/>
</defs></svg>

<script>
// A pair of marks spans 100 document units, 65 screen pixels at 65% zoom.
function ruler(id, from, to, stacked) {
  const host = document.getElementById(id);
  for (let v = from; v <= to; v += 100) {
    const pair = document.createElement('div');
    pair.className = 'pair';
    for (const n of [v, v + 50]) {
      if (n > to) continue;
      const mark = document.createElement('div');
      mark.className = 'mark';
      mark.innerHTML = stacked ? [...String(n)].join('<br>') : Math.abs(n);
      pair.append(mark);
    }
    host.append(pair);
  }
}
ruler('hruler', -700, 1650, false);
ruler('vruler', 0, 700, true);
</script>
<script src="https://cdn.jsdelivr.net/npm/bootstrap@5.3.0/dist/js/bootstrap.bundle.min.js"></script>
</body>
</html>
